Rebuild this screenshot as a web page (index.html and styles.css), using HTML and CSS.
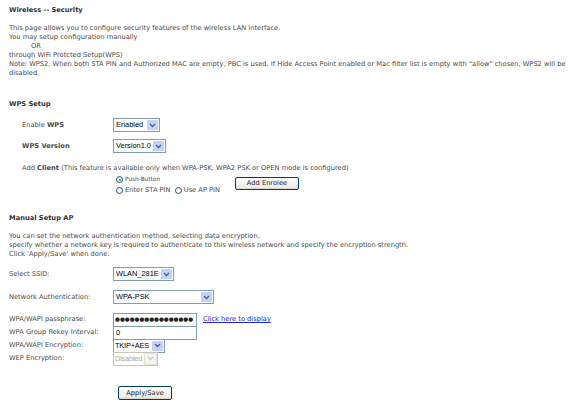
FILE: index.html
```html
<!DOCTYPE html>
<html>
<head>
<meta charset="utf-8">
<link rel="stylesheet" href="styles.css">
</head>
<body>
<div class="page">
  <div class="title">Wireless -- Security</div>
  <div class="intro">
    <div>This page allows you to configure security features of the wireless LAN interface.</div>
    <div>You may setup configuration manually</div>
    <div class="or">OR</div>
    <div>through WiFi Protcted Setup(WPS)</div>
    <div>Note: WPS2, When both STA PIN and Authorized MAC are empty, PBC is used. If Hide Access Point enabled or Mac filter list is empty with "allow" chosen, WPS2 will be disabled</div>
  </div>

  <div class="section-title wps-title">WPS Setup</div>
  <div class="wps">
    <div class="row row-enable">
      <span class="lbl">Enable <b>WPS</b></span>
      <span class="sel sel-enabled"><span class="val">Enabled</span><span class="arrow"><svg width="7" height="5" viewBox="0 0 7 5"><path d="M1 1 L3.5 3.5 L6 1" fill="none" stroke="#4d6185" stroke-width="1.3"/></svg></span></span>
    </div>
    <div class="row row-version">
      <span class="lbl"><b>WPS Version</b></span>
      <span class="sel sel-version"><span class="val">Version1.0</span><span class="arrow"><svg width="7" height="5" viewBox="0 0 7 5"><path d="M1 1 L3.5 3.5 L6 1" fill="none" stroke="#4d6185" stroke-width="1.3"/></svg></span></span>
    </div>
    <div class="add-client">Add <b>Client</b> (This feature is available only when WPA-PSK, WPA2 PSK or OPEN mode is configured)</div>
    <div class="enrol">
      <div class="radios">
        <div class="radio-row small"><span class="radio on"></span>Push-Button</div>
        <div class="radio-row"><span class="radio"></span>Enter STA PIN <span class="radio r2"></span>Use AP PIN</div>
      </div>
      <span class="btn btn-enrol">Add Enrolee</span>
    </div>
  </div>

  <div class="section-title manual-title">Manual Setup AP</div>
  <div class="manual-intro">
    <div>You can set the network authentication method, selecting data encryption,</div>
    <div>specify whether a network key is required to authenticate to this wireless network and specify the encryption strength.</div>
    <div>Click 'Apply/Save' when done.</div>
  </div>

  <div class="form">
    <div class="frow frow-ssid">
      <span class="flbl">Select SSID:</span>
      <span class="sel sel-ssid"><span class="val">WLAN_281E</span><span class="arrow"><svg width="7" height="5" viewBox="0 0 7 5"><path d="M1 1 L3.5 3.5 L6 1" fill="none" stroke="#4d6185" stroke-width="1.3"/></svg></span></span>
    </div>
    <div class="frow frow-auth">
      <span class="flbl">Network Authentication:</span>
      <span class="sel sel-auth"><span class="val">WPA-PSK</span><span class="arrow"><svg width="7" height="5" viewBox="0 0 7 5"><path d="M1 1 L3.5 3.5 L6 1" fill="none" stroke="#4d6185" stroke-width="1.3"/></svg></span></span>
    </div>
    <div class="group">
      <div class="grow">
        <span class="flbl">WPA/WAPI passphrase:</span>
        <span class="inp"><span class="dots">●●●●●●●●●●●●●●●●</span></span>
        <a class="link" href="#">Click here to display</a>
      </div>
      <div class="grow">
        <span class="flbl">WPA Group Rekey Interval:</span>
        <span class="inp"><span class="ival">0</span></span>
      </div>
      <div class="grow">
        <span class="flbl">WPA/WAPI Encryption:</span>
        <span class="sel sel-enc"><span class="val">TKIP+AES</span><span class="arrow"><svg width="7" height="5" viewBox="0 0 7 5"><path d="M1 1 L3.5 3.5 L6 1" fill="none" stroke="#4d6185" stroke-width="1.3"/></svg></span></span>
      </div>
      <div class="grow">
        <span class="flbl">WEP Encryption:</span>
        <span class="sel sel-wep disabled"><span class="val">Disabled</span><span class="arrow"><svg width="7" height="5" viewBox="0 0 7 5"><path d="M1 1 L3.5 3.5 L6 1" fill="none" stroke="#c9c7ba" stroke-width="1.3"/></svg></span></span>
      </div>
    </div>
  </div>

  <div class="apply-wrap"><span class="btn btn-apply">Apply/Save</span></div>
</div>
</body>
</html>
```

FILE: styles.css
```css
html, body {
  margin: 0;
  padding: 0;
  background: #ffffff;
}
.page {
  padding: 6px 0 0 9px;
  font-family: "DejaVu Sans", Verdana, sans-serif;
  font-size: 6.7px;
  line-height: 9px;
  color: #4a4a4a;
}
.title {
  font-weight: bold;
  color: #333;
}
.intro {
  margin-top: 9px;
}
.or {
  padding-left: 22px;
}
.section-title {
  font-weight: bold;
  color: #333;
}
.wps-title {
  margin-top: 22px;
}
.wps {
  padding-left: 13px;
  margin-top: 9px;
}
.row {
  display: flex;
  align-items: center;
  height: 14px;
}
.row-version {
  margin-top: 7px;
}
.lbl {
  width: 91px;
}
.sel {
  display: inline-flex;
  align-items: stretch;
  box-sizing: border-box;
  height: 14px;
  border: 1px solid #7f9db9;
  background: #fff;
  font-family: "Liberation Sans", Arial, sans-serif;
  font-size: 7.4px;
  color: #000;
}
.sel .val {
  flex: 1;
  padding-left: 2px;
  line-height: 12px;
  white-space: nowrap;
  overflow: hidden;
}
.sel .arrow {
  width: 11px;
  flex: none;
  margin: 1px;
  display: flex;
  align-items: center;
  justify-content: center;
  background: #c1d3fb;
  border-radius: 1px;
}
.sel.disabled {
  border-color: #c9c7ba;
  color: #aca899;
}
.sel.disabled .arrow {
  background: #f4f3ee;
  border: 1px solid #e0dfd8;
  margin: 0;
}
.sel-enabled { width: 47px; }
.sel-version { width: 53px; }
.sel-ssid { width: 61px; }
.sel-auth { width: 101px; }
.sel-enc { width: 52px; }
.sel-enc .val { padding-left: 1px; letter-spacing: -0.2px; }
.sel-wep { width: 45px; }
.sel-wep .val { padding-left: 1px; letter-spacing: -0.2px; }

.add-client {
  margin-top: 11px;
}
.enrol {
  display: flex;
  align-items: flex-start;
  padding-left: 94px;
  margin-top: 1px;
}
.radios {
  width: 119px;
}
.radio-row {
  display: flex;
  align-items: center;
  height: 11px;
  white-space: pre;
}
.radio-row.small {
  font-size: 5.8px;
}
.radio {
  display: inline-block;
  box-sizing: border-box;
  width: 7px;
  height: 7px;
  border: 1px solid #1c5180;
  border-radius: 50%;
  margin-right: 2px;
  background: #fff;
  position: relative;
}
.radio.on::after {
  content: "";
  position: absolute;
  left: 1.5px;
  top: 1.5px;
  width: 2px;
  height: 2px;
  border-radius: 50%;
  background: #21a121;
}
.radio.r2 {
  margin-left: 2px;
}
.btn {
  display: inline-flex;
  align-items: center;
  justify-content: center;
  box-sizing: border-box;
  border: 1px solid #003c74;
  border-radius: 2px;
  background: linear-gradient(#ffffff, #ecebe6 85%, #d6d0c5);
  font-family: "DejaVu Sans", Verdana, sans-serif;
  font-size: 6.7px;
  color: #222;
}
.btn-enrol {
  width: 64px;
  height: 13px;
  margin-top: 3px;
}
.manual-title {
  margin-top: 18px;
}
.manual-intro {
  margin-top: 9px;
}
.form {
  margin-top: 8px;
}
.frow {
  display: flex;
  align-items: center;
  height: 14px;
}
.frow-auth {
  margin-top: 9px;
}
.flbl {
  width: 104px;
  flex: none;
}
.group {
  margin-top: 9px;
  display: flex;
  flex-direction: column;
}
.grow {
  display: flex;
  align-items: center;
  height: 13px;
}
.inp {
  box-sizing: border-box;
  width: 84px;
  height: 14px;
  border: 1px solid #7f9db9;
  background: #fff;
  display: flex;
  align-items: center;
  overflow: hidden;
  color: #000;
  font-family: "DejaVu Sans", sans-serif;
}
.dots {
  font-size: 5.6px;
  letter-spacing: 0;
  padding-left: 1px;
  white-space: nowrap;
  color: #222;
}
.ival {
  font-size: 7.5px;
  padding-left: 2px;
  font-family: "Liberation Sans", Arial, sans-serif;
}
.link {
  margin-left: 6px;
  color: #2222dd;
  text-decoration: underline;
}
.apply-wrap {
  margin-top: 21px;
  padding-left: 109px;
}
.btn-apply {
  width: 54px;
  height: 14px;
}
```
